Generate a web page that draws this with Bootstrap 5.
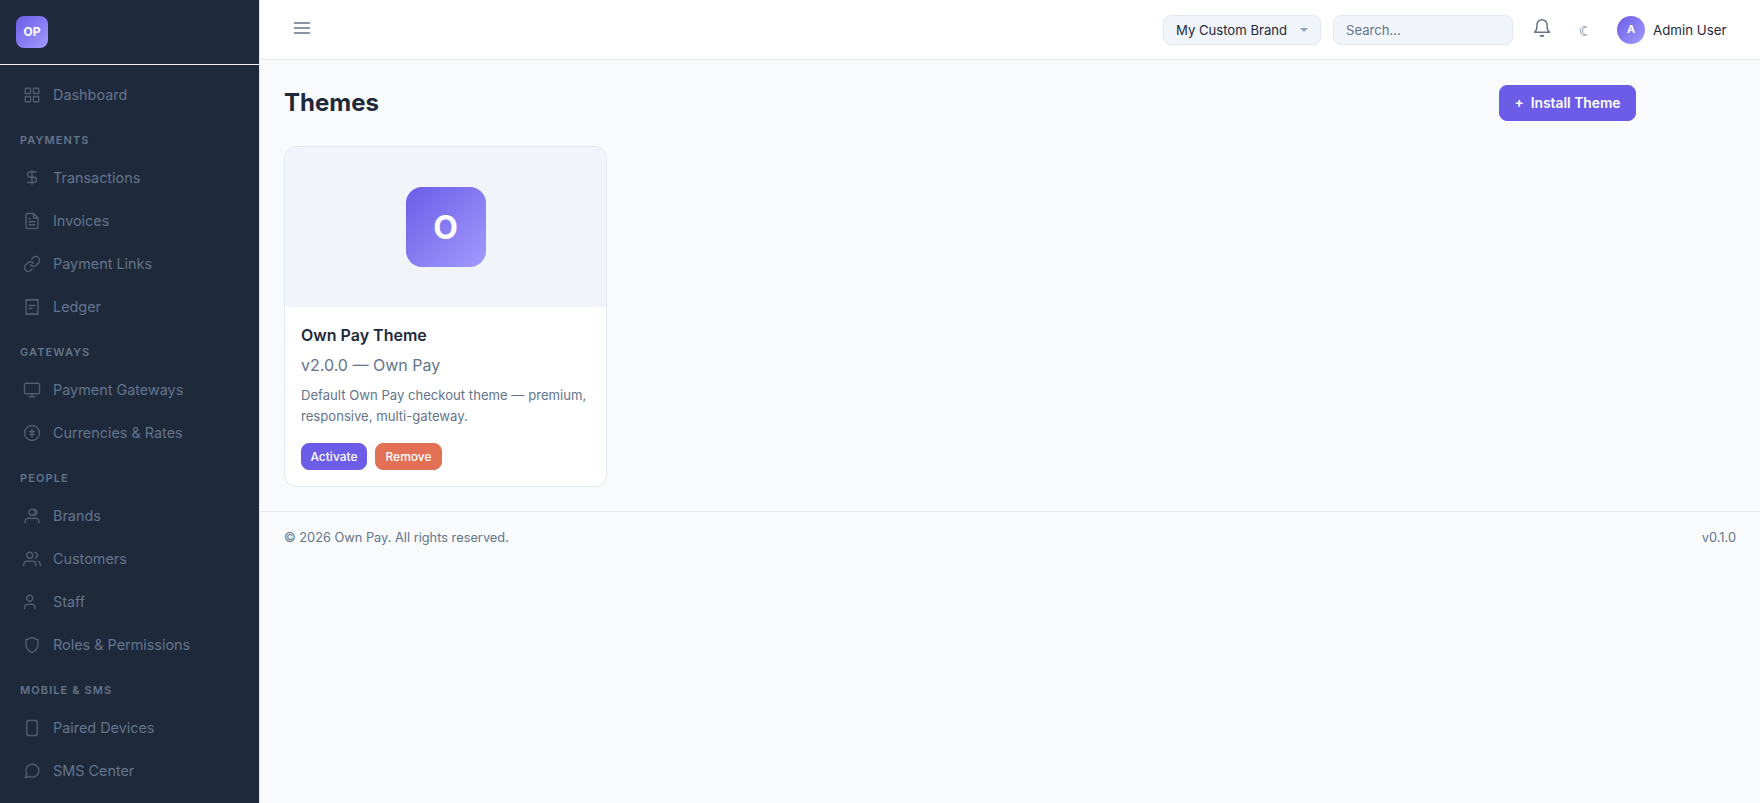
<!DOCTYPE html>
<html lang="en">
<head>
<meta charset="utf-8">
<meta name="viewport" content="width=device-width, initial-scale=1">
<title>Themes</title>
<link href="https://cdn.jsdelivr.net/npm/bootstrap@5.3.0/dist/css/bootstrap.min.css" rel="stylesheet">
<style>
:root{--op-primary:#6c5ce7;--op-grad:linear-gradient(135deg,#6c5ce7,#a29bfe);--op-line:#e2e8f0;--op-soft:#f1f5f9;--op-muted:#64748b;--op-ink:#1e293b}
body{font-family:Inter,"Liberation Sans",sans-serif;font-size:16px;line-height:1.6;color:var(--op-ink);background:#f8fafc}
.side{width:260px;background:#1e293b;border-right:1px solid var(--op-line);overflow:hidden}
.side-head{height:65px;padding-left:16px;border-bottom:1px solid #f1f5f9}
.logo{width:32px;height:32px;border-radius:8px;background:var(--op-grad);font-size:12px;font-weight:700}
.side-nav{padding-top:8.5px}
.side-link{height:43px;padding-left:23px;gap:12px;font-size:14.4px;color:var(--op-muted);text-decoration:none}
.side-link svg.ico{width:18px;height:18px;stroke-width:1.9;opacity:.7}
.side-title{height:40px;padding:14px 0 0 20px;font-size:11px;font-weight:600;letter-spacing:1.1px;line-height:18px;color:var(--op-muted)}
svg.ico{width:20px;height:20px;fill:none;stroke:currentColor;stroke-width:1.8;stroke-linecap:round;stroke-linejoin:round;flex:none}
svg.bars{stroke-width:2}
.topbar{height:60px;background:#fff;border-bottom:1px solid var(--op-line);padding:0 34px 0 32px}
.icon-btn{color:var(--op-muted);line-height:0;padding:0 0 4px;border:0;background:none}
.brand-pick,.find{height:30px;border:1px solid var(--op-line);border-radius:8px;background:var(--op-soft);font-size:13.12px;line-height:18px;padding:0 12px}
.brand-pick{width:158px;color:var(--op-ink)}
.find{width:180px;margin:0 19px 0 12px;color:var(--op-muted)}
.find::placeholder{color:var(--op-muted);opacity:1}
.caret{width:0;height:0;border:4px solid transparent;border-top-color:#94a3b8;border-bottom:0}
.moon{width:32px;margin:0 18px 0 15px;padding-top:2px;line-height:0;color:#7b8a9e}
.avatar{width:28px;height:28px;padding-top:1px;background:var(--op-grad);font-size:11px;font-weight:700}
.user{width:73px;margin-left:8px;padding-top:2px;font-size:13.3px;white-space:nowrap}
.page{max-width:1400px;padding:24px}
.page-head{height:37px;margin-bottom:25px}
.page-head h1{font-size:24px;font-weight:700;line-height:1.2;padding-top:1px}
.btn-op{--bs-btn-color:#fff;--bs-btn-bg:#6c5ce7;--bs-btn-border-color:#6c5ce7;--bs-btn-hover-color:#fff;--bs-btn-hover-bg:#5b4bd6;--bs-btn-hover-border-color:#5b4bd6;border-radius:8px}
.btn-drop{--bs-btn-color:#fff;--bs-btn-bg:#e17055;--bs-btn-border-color:#e17055;--bs-btn-hover-color:#fff;--bs-btn-hover-bg:#cf6046;--bs-btn-hover-border-color:#cf6046;border-radius:8px}
.btn-add{width:137px;height:36px;font-size:13.8px;font-weight:600;padding:1px 0 0}
.btn-mini{height:27px;font-size:12px;font-weight:500;padding:0;line-height:25px}
.btn-on{width:66px}
.btn-off{width:67px}
.grid-4{display:grid;grid-template-columns:repeat(4,1fr);gap:20px}
.theme{border:1px solid var(--op-line);border-radius:12px;overflow:hidden;height:341px;background:#fff}
.preview{height:160px;background:var(--op-soft)}
.tile{width:80px;height:80px;padding-top:2px;border-radius:16px;background:var(--op-grad);font-size:32px;font-weight:700}
.theme-body{padding:15px 16px}
.theme h2{font-size:16px;font-weight:600;line-height:26px;margin:0 0 4px}
.ver{line-height:26px;color:var(--op-muted);margin:0 0 7px}
.desc{font-size:13.12px;line-height:21px;color:var(--op-muted);margin:0 0 16px}
.foot{border-top:1px solid var(--op-line);padding:16px 24px;font-size:12.8px;line-height:20px;color:var(--op-muted)}
</style>
</head>
<body class="overflow-hidden">
<div class="d-flex vh-100">
<aside class="side flex-shrink-0">
  <div class="side-head d-flex align-items-center"><div class="logo d-flex align-items-center justify-content-center text-white">OP</div></div>
  <nav class="side-nav d-flex flex-column">
    <a class="side-link d-flex align-items-center" href="#"><svg class="ico" viewBox="0 0 24 24"><path d="M3 3h7v7H3zM14 3h7v7h-7zM3 14h7v7H3zM14 14h7v7h-7z"/></svg>Dashboard</a>
    <div class="side-title">PAYMENTS</div>
    <a class="side-link d-flex align-items-center" href="#"><svg class="ico" viewBox="0 0 24 24"><path d="M12 2v18M18 4H9.5a3.5 3.5 0 0 0 0 7h5a3.5 3.5 0 0 1 0 7H6"/></svg>Transactions</a>
    <a class="side-link d-flex align-items-center" href="#"><svg class="ico" viewBox="0 0 24 24"><path d="M14 2H6a2 2 0 0 0-2 2v16a2 2 0 0 0 2 2h12a2 2 0 0 0 2-2V8zM14 2v6h6M16 13H8M16 17H8M10 9H8"/></svg>Invoices</a>
    <a class="side-link d-flex align-items-center" href="#"><svg class="ico" viewBox="0 0 24 24"><path d="M10 13a5 5 0 0 0 7.54.54l3-3a5 5 0 0 0-7.07-7.07l-1.72 1.71M14 11a5 5 0 0 0-7.54-.54l-3 3a5 5 0 0 0 7.07 7.07l1.71-1.71"/></svg>Payment Links</a>
    <a class="side-link d-flex align-items-center" href="#"><svg class="ico" viewBox="0 0 24 24"><path d="M4 2v20l2-1 2 1 2-1 2 1 2-1 2 1 2-1 2 1V2l-2 1-2-1-2 1-2-1-2 1-2-1-2 1zM8 10h8M8 14h4"/></svg>Ledger</a>
    <div class="side-title">GATEWAYS</div>
    <a class="side-link d-flex align-items-center" href="#"><svg class="ico" viewBox="0 0 24 24"><rect x="2" y="3" width="20" height="14" rx="2"/><path d="M8 21h8M12 17v4"/></svg>Payment Gateways</a>
    <a class="side-link d-flex align-items-center" href="#"><svg class="ico" viewBox="0 0 24 24"><circle cx="12" cy="12" r="10"/><path d="M12 7v10M9 10h6M9 14h6"/></svg>Currencies &amp; Rates</a>
    <div class="side-title">PEOPLE</div>
    <a class="side-link d-flex align-items-center" href="#"><svg class="ico" viewBox="0 0 24 24"><path d="M21 21v-2a4 4 0 0 0-4-4H7a4 4 0 0 0-4 4v2"/><circle cx="12" cy="7" r="4"/><path d="M15.5 3.13a4 4 0 0 1 0 7.75"/></svg>Brands</a>
    <a class="side-link d-flex align-items-center" href="#"><svg class="ico" viewBox="0 0 24 24"><path d="M17 21v-2a4 4 0 0 0-4-4H5a4 4 0 0 0-4 4v2"/><circle cx="9" cy="7" r="4"/><path d="M23 21v-2a4 4 0 0 0-3-3.87M16 3.13a4 4 0 0 1 0 7.75"/></svg>Customers</a>
    <a class="side-link d-flex align-items-center" href="#"><svg class="ico" viewBox="0 0 24 24"><path d="M16 21v-2a4 4 0 0 0-4-4H6a4 4 0 0 0-4 4v2"/><circle cx="9" cy="7" r="4"/></svg>Staff</a>
    <a class="side-link d-flex align-items-center" href="#"><svg class="ico" viewBox="0 0 24 24"><path d="M12 22s8-4 8-10V5l-8-3-8 3v7c0 6 8 10 8 10z"/></svg>Roles &amp; Permissions</a>
    <div class="side-title">MOBILE &amp; SMS</div>
    <a class="side-link d-flex align-items-center" href="#"><svg class="ico" viewBox="0 0 24 24"><rect x="5" y="2" width="14" height="20" rx="2"/></svg>Paired Devices</a>
    <a class="side-link d-flex align-items-center" href="#"><svg class="ico" viewBox="0 0 24 24"><path d="M21 11.5a8.38 8.38 0 0 1-.9 3.8 8.5 8.5 0 0 1-7.6 4.7 8.38 8.38 0 0 1-3.8-.9L3 21l1.9-5.7a8.38 8.38 0 0 1-.9-3.8 8.5 8.5 0 0 1 4.7-7.6 8.38 8.38 0 0 1 3.8-.9h.5a8.48 8.48 0 0 1 8 8z"/></svg>SMS Center</a>
  </nav>
</aside>
<div class="flex-grow-1">
  <header class="topbar d-flex align-items-center">
    <button class="icon-btn me-auto" aria-label="Menu"><svg class="ico bars" viewBox="0 0 24 24"><path d="M3 6h18M3 12h18M3 18h18"/></svg></button>
    <div class="brand-pick d-flex align-items-center justify-content-between">My Custom Brand<span class="caret"></span></div>
    <input class="find" placeholder="Search..." aria-label="Search">
    <button class="icon-btn" aria-label="Notifications"><svg class="ico" viewBox="0 0 24 24"><path d="M18 8A6 6 0 0 0 6 8c0 7-3 9-3 9h18s-3-2-3-9M13.73 21a2 2 0 0 1-3.46 0"/></svg></button>
    <span class="moon d-flex justify-content-center"><svg width="7" height="10" viewBox="0 0 7 10" fill="none" stroke="currentColor" stroke-width=".8"><path d="M6.5 1.1C2.8-.4.5 2 .5 5s2.300 5.400 6 3.900C3.600 8.300 2.600 7 2.600 5s1-3.300 3.900-3.900z"/></svg></span>
    <div class="avatar rounded-circle d-flex align-items-center justify-content-center text-white">A</div>
    <span class="user">Admin User</span>
  </header>
  <main class="page">
    <div class="page-head d-flex align-items-center justify-content-between"><h1 class="m-0">Themes</h1><button class="btn btn-op btn-add">+&nbsp; Install Theme</button></div>
    <div class="grid-4">
      <article class="theme">
        <div class="preview d-flex align-items-center justify-content-center"><div class="tile d-flex align-items-center justify-content-center text-white">O</div></div>
        <div class="theme-body">
          <h2>Own Pay Theme</h2>
          <p class="ver">v2.0.0 — Own Pay</p>
          <p class="desc">Default Own Pay checkout theme — premium, responsive, multi-gateway.</p>
          <div class="d-flex gap-2"><button class="btn btn-op btn-mini btn-on">Activate</button><button class="btn btn-drop btn-mini btn-off">Remove</button></div>
        </div>
      </article>
    </div>
  </main>
  <footer class="foot d-flex justify-content-between"><span>© 2026 Own Pay. All rights reserved.</span><span>v0.1.0</span></footer>
</div>
</div>
<script src="https://cdn.jsdelivr.net/npm/bootstrap@5.3.0/dist/js/bootstrap.bundle.min.js"></script>
</body>
</html>
